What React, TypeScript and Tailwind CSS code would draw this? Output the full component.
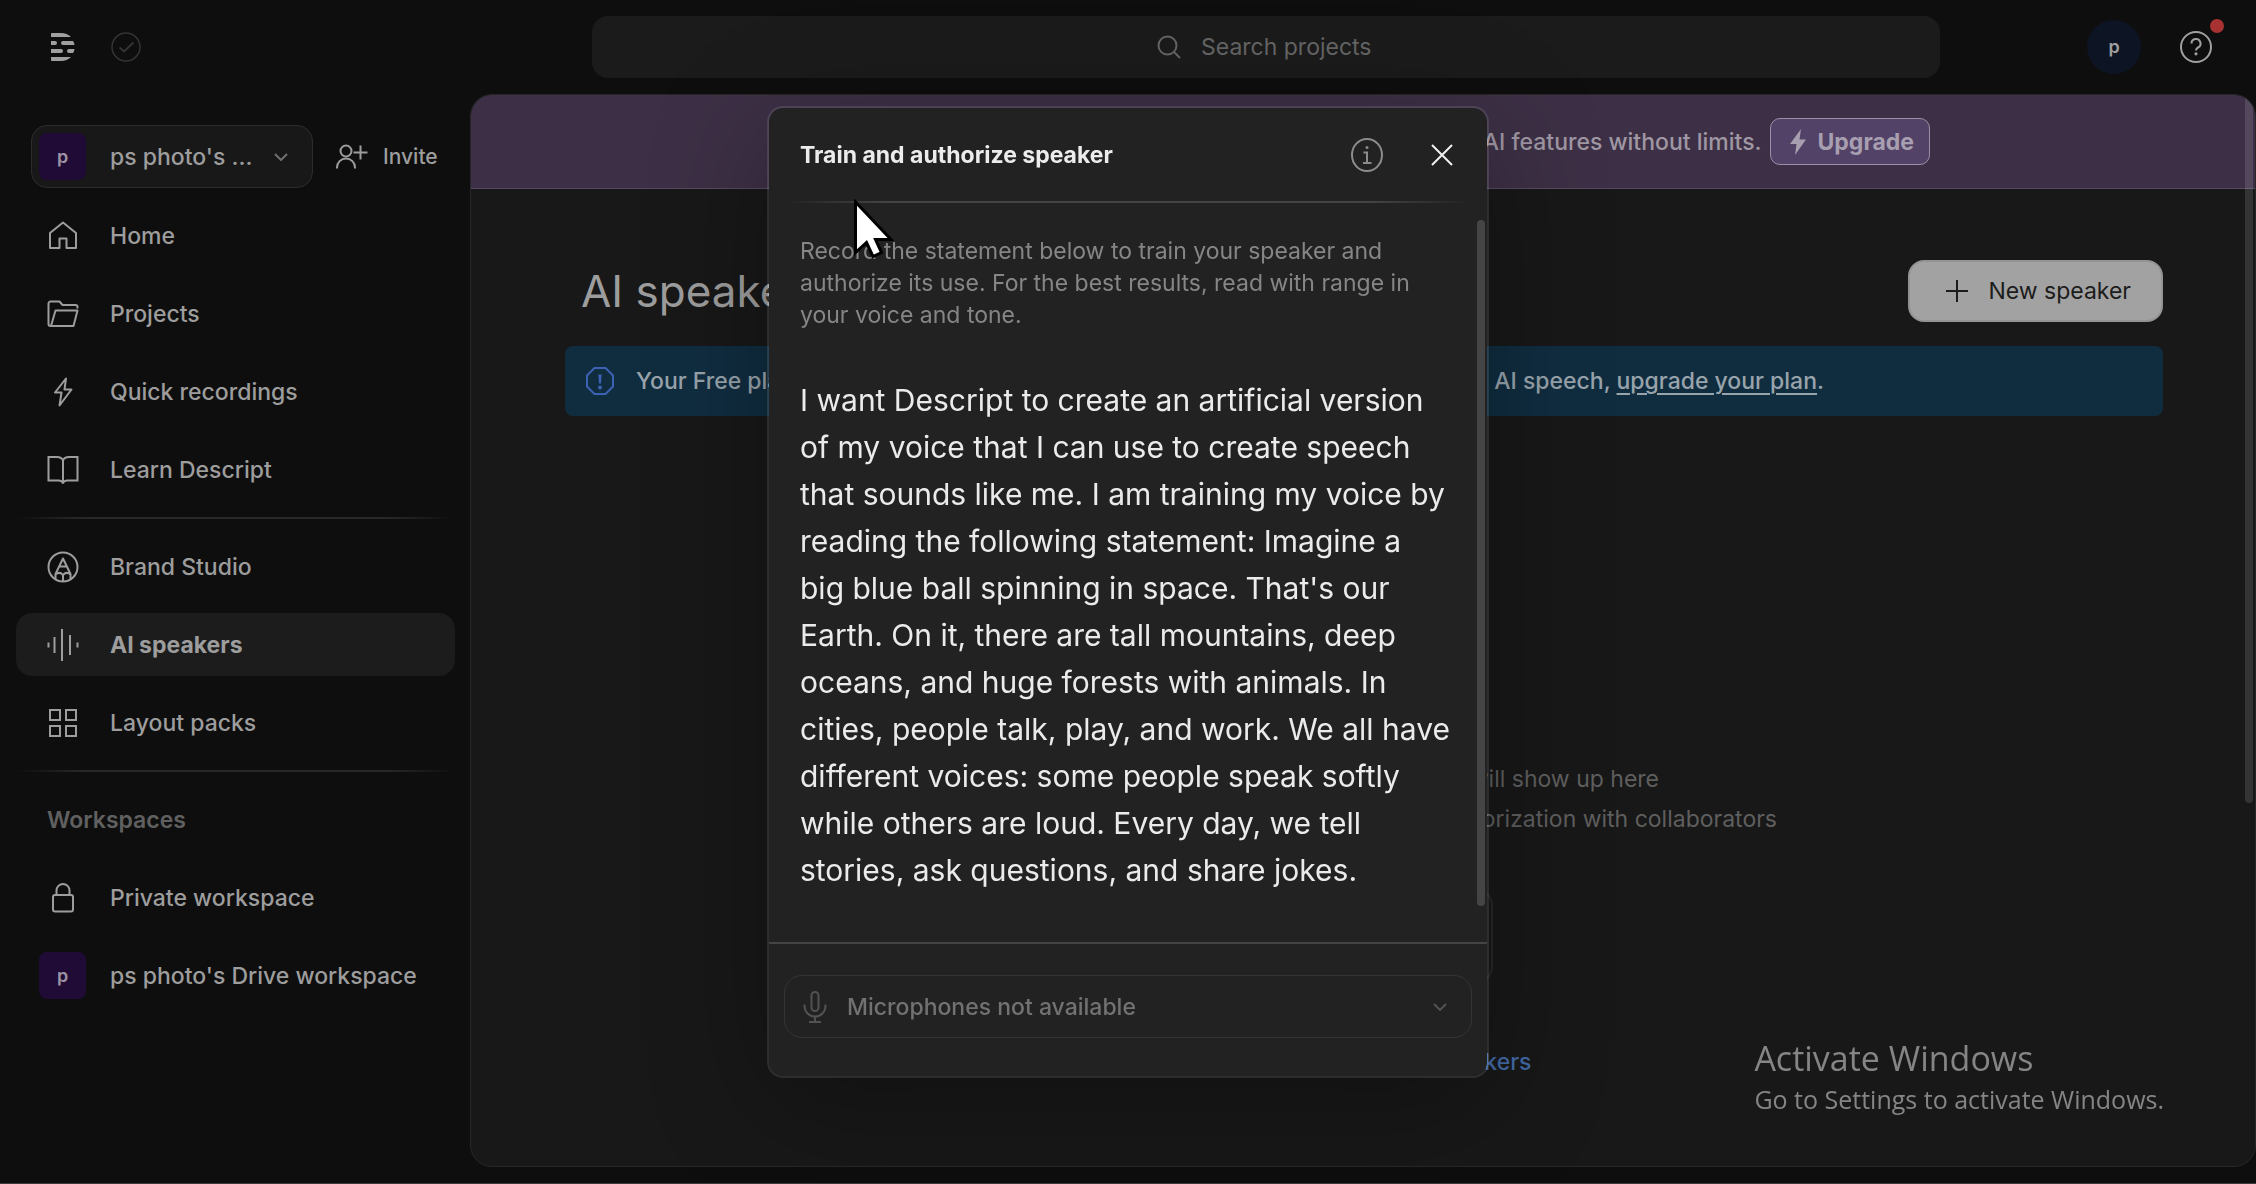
import type { ReactNode } from "react";

type IconProps = { children: ReactNode; size?: string; width?: number };

function Icon({ children, size = "size-8", width = 2 }: IconProps) {
  return (
    <svg
      viewBox="0 0 32 32"
      className={`${size} shrink-0`}
      fill="none"
      stroke="currentColor"
      strokeWidth={width}
      aria-hidden="true"
    >
      {children}
    </svg>
  );
}

const HomeIcon = () => (
  <Icon>
    <path d="M3 28V13L16 2.500 29 13V28H19.500V18.500H12.500V28Z" strokeLinejoin="round" />
  </Icon>
);

const FolderIcon = () => (
  <Icon>
    <path d="M30.500 10.500V9a2 2 0 0 0-2-2H15.500L12.500 3.500H3.500a2 2 0 0 0-2 2V26a2 2 0 0 0 2 2H26.500L30.500 12.500H8.500L4 28" strokeLinejoin="round" />
  </Icon>
);

const BoltIcon = () => (
  <Icon>
    <path d="M19 2.500 8 16.500H14.500L12.500 29.500 24.500 13.500H17.500Z" strokeLinejoin="round" />
  </Icon>
);

const BookIcon = () => (
  <Icon>
    <path d="M16 6.500C15 4 12.500 3 10 3H1.500V26.500H11.500C13.500 26.500 15.500 27 16 29.500 16.500 27 18.500 26.500 20.500 26.500H30.500V3H22C19.500 3 17 4 16 6.500ZM16 6.500V29" />
  </Icon>
);

const BrandIcon = () => (
  <Icon>
    <circle cx="16" cy="16" r="14.500" />
    <path d="M8.500 28.500V23L16 7.500 23.500 23V28.500M12.500 15.500H19.500M16 30V22.500M8.500 23.500Q12 20.500 15 23L16 24.500 17 23Q20 20.500 23.500 23.500" strokeLinejoin="round" />
  </Icon>
);

const WaveIcon = () => (
  <Icon>
    <path d="M1.500 13.500V18.500M7.500 8V24M15 0V32M23 6V26M30.500 13.500V18.500" />
  </Icon>
);

const GridIcon = () => (
  <Icon>
    <path d="M3 3H13V13H3ZM19 3H29V13H19ZM3 19H13V29H3ZM19 19H29V29H19Z" />
  </Icon>
);

const LockIcon = () => (
  <Icon>
    <rect x="6" y="13" width="20" height="16.500" rx="2" />
    <path d="M9.500 13V8.500a6.500 6.500 0 0 1 13 0V13" />
  </Icon>
);

const Chevron = () => (
  <svg viewBox="0 0 14 8" className="h-2 w-3.5 shrink-0" fill="none" stroke="currentColor" strokeWidth="2" aria-hidden="true">
    <path d="M1 1 7 7 13 1" />
  </svg>
);

function DriveBadge() {
  return (
    <span className="flex size-[47px] shrink-0 items-center justify-center rounded-lg bg-[#200b36] text-lg font-semibold text-[#9c93a3]">
      p
    </span>
  );
}

function NavItem({ icon, label, active = false }: { icon: ReactNode; label: string; active?: boolean }) {
  return (
    <li>
      <a
        href="#"
        aria-current={active ? "page" : undefined}
        className={`flex h-[63px] items-center gap-6 rounded-2xl pl-[23px] whitespace-nowrap ${
          active ? "bg-[#1c1c1c] font-bold" : "font-medium"
        }`}
      >
        <span className="flex w-[47px] shrink-0 justify-center">{icon}</span>
        {label}
      </a>
    </li>
  );
}

const Separator = () => (
  <div className="my-4 flex h-0.5">
    <div className="w-[15%] bg-linear-to-r from-transparent to-[#282828]" />
    <div className="flex-1 bg-[#282828]" />
    <div className="w-[15%] bg-linear-to-r from-[#282828] to-transparent" />
  </div>
);

function TopBar() {
  return (
    <header className="flex h-[94px] shrink-0 items-center">
      <div className="flex w-[592px] shrink-0 items-center gap-9 pl-[51px]">
        <svg viewBox="0 0 24 28" className="h-7 w-6" fill="#a0a0a0" aria-label="Descript" role="img">
          <path d="M0 4V1Q0 0 1 0H10Q16 0 20 4ZM0 24H20Q16 28 10 28H1Q0 28 0 27Z" />
          <path d="M0 8H4Q6 8 6 10T4 12H0ZM12 8H22Q23.500 10 23.500 12H12Q10 12 10 10T12 8ZM0 16H10Q12 16 12 18T10 20H0ZM18 16H23.500Q23.500 18 22 20H18Q16 20 16 18T18 16Z" />
        </svg>
        <svg viewBox="0 0 30 30" className="size-[30px] text-[#333333]" fill="none" stroke="currentColor" strokeWidth="1.500" aria-label="Synced" role="img">
          <circle cx="15" cy="15" r="14" />
          <path d="M8.500 15.500 13 19.500 22.500 10.500" strokeWidth="2" />
        </svg>
      </div>
      <label className="flex h-[62px] flex-1 items-center justify-center gap-5 rounded-2xl bg-[#1b1b1b] text-[#656565]">
        <svg viewBox="0 0 24 24" className="size-6" fill="none" stroke="currentColor" strokeWidth="2" aria-hidden="true">
          <circle cx="10.500" cy="10.500" r="9" />
          <path d="M17 17 23 23" />
        </svg>
        <input
          type="text"
          aria-label="Search projects"
          placeholder="Search projects"
          className="w-[174px] bg-transparent text-[23px] outline-none placeholder:text-[#656565]"
        />
      </label>
      <div className="flex w-[316px] shrink-0 items-center justify-end gap-[39px] pr-11">
        <button type="button" aria-label="Account" className="flex size-[54px] items-center justify-center rounded-full bg-[#0d1423] text-lg font-semibold text-[#a0a0a0]">
          p
        </button>
        <button type="button" aria-label="Help" className="relative text-[#a0a0a0]">
          <Icon>
            <circle cx="16" cy="16" r="15" />
            <path d="M11.500 12.500a4.500 4.500 0 1 1 6.500 4C16.500 17.300 16 18 16 19.500" />
            <circle cx="16" cy="22.800" r="1" fill="currentColor" stroke="none" />
            <circle cx="16" cy="22.800" r=".6" />
          </Icon>
          <span className="absolute -top-3 -right-3 size-3.5 rounded-full bg-[#a83232]" />
        </button>
      </div>
    </header>
  );
}

function Sidebar() {
  return (
    <aside className="w-[470px] shrink-0 pt-[31px] pr-[15px] pl-4 font-medium">
      <div className="flex items-center pl-[15px]">
        <button type="button" className="flex h-[63px] w-[282px] items-center rounded-2xl border border-[#2c2c2c] bg-[#181818] pr-6 pl-[7px]">
          <DriveBadge />
          <span className="flex-1 truncate pl-6 text-left">ps photo's ...</span>
          <span className="text-[#6f6f6f]"><Chevron /></span>
        </button>
        <button type="button" className="ml-[23px] flex items-center gap-[15px] text-[21px]">
          <Icon>
            <circle cx="10" cy="10" r="5.500" />
            <path d="M1 27.500V26.500a9 9 0 0 1 18 0V27.500M24.500 4.500V18.500M17.500 11.500H31.500" />
          </Icon>
          Invite
        </button>
      </div>
      <nav aria-label="Main" className="mt-4">
        <ul className="flex flex-col gap-[15px]">
          <NavItem icon={<HomeIcon />} label="Home" />
          <NavItem icon={<FolderIcon />} label="Projects" />
          <NavItem icon={<BoltIcon />} label="Quick recordings" />
          <NavItem icon={<BookIcon />} label="Learn Descript" />
        </ul>
        <Separator />
        <ul className="flex flex-col gap-[15px]">
          <NavItem icon={<BrandIcon />} label="Brand Studio" />
          <NavItem icon={<WaveIcon />} label="AI speakers" active />
          <NavItem icon={<GridIcon />} label="Layout packs" />
        </ul>
        <Separator />
        <h2 className="flex h-[63px] items-center pl-[31px] font-semibold text-[#606060]">Workspaces</h2>
        <ul className="mt-[15px] flex flex-col gap-[15px]">
          <NavItem icon={<LockIcon />} label="Private workspace" />
          <NavItem icon={<DriveBadge />} label="ps photo's Drive workspace" />
        </ul>
      </nav>
    </aside>
  );
}

function Content() {
  return (
    <main className="relative mb-4 flex min-w-0 flex-1 flex-col overflow-hidden rounded-[22px] border border-[#272727] bg-[#181818]">
      <div className="flex h-[94px] shrink-0 justify-center border-b border-[#574a60] bg-[#3d3046] font-medium whitespace-nowrap text-[#9f97a3]">
        <div className="flex w-[1134px] max-w-full items-center justify-end gap-2">
          <p>AI features without limits.</p>
          <button type="button" className="flex h-[47px] items-center gap-3 rounded-[10px] border border-[#9c8fa8] bg-[#534267] pr-[15px] pl-[19px] font-bold text-[#a79fb0]">
            <svg viewBox="0 0 16 26" className="h-[26px] w-4" fill="currentColor" aria-hidden="true">
              <path d="M11 0 0 15H6.500L5 26 16 10.500H9.500Z" />
            </svg>
            Upgrade
          </button>
        </div>
      </div>

      <div className="flex flex-1 flex-col pt-[71px] pr-[92px] pb-[84px] pl-[94px]">
        <div className="flex items-center justify-between pl-4">
          <h1 className="text-[44px]">AI speakers</h1>
          <button type="button" className="flex h-[62px] items-center gap-5 rounded-2xl border-2 border-[#939393] bg-[#a2a2a2] pr-[30px] pl-9 text-[#1c1c1c]">
            <svg viewBox="0 0 22 22" className="size-[22px]" fill="none" stroke="currentColor" strokeWidth="2" aria-hidden="true">
              <path d="M11 0V22M0 11H22" />
            </svg>
            New speaker
          </button>
        </div>
        <div className="mt-6 flex h-[70px] items-center gap-[22px] rounded-lg bg-[#102d40] pl-[21px] font-medium whitespace-nowrap text-[#98a3ab]">
          <svg viewBox="0 0 28 28" className="size-7 shrink-0 text-[#3c62b3]" fill="none" stroke="currentColor" strokeWidth="2" aria-hidden="true">
            <path d="M8.500 1H19.500L27 8.500V19.500L19.500 27H8.500L1 19.500V8.500Z" />
            <path d="M12.400 7.500H15.600L15 16.500H13Z" fill="currentColor" stroke="none" />
            <circle cx="14" cy="20.500" r="2" fill="currentColor" stroke="none" />
          </svg>
          <p className="flex w-[1188px] max-w-full justify-between">
            <span>Your Free plan</span>
            <span>
              AI speech, <a href="#" className="underline decoration-2 underline-offset-4">upgrade your plan</a>.
            </span>
          </p>
        </div>

        <div className="flex flex-1 flex-col items-center justify-end text-right leading-10 whitespace-nowrap text-[#5f5f5f]">
          <p className="w-[590px]">will show up here</p>
          <p className="w-[826px]">authorization with collaborators</p>
          <div className="mt-[50px] h-[94px] w-[257px] rounded-2xl border-2 border-[#282828]" />
          <a href="#" className="mt-[59px] w-[335px] font-medium text-[#4169a5]">AI speakers</a>
        </div>
      </div>
      <div className="absolute top-0 right-0.5 h-[708px] w-2 rounded-b-full bg-white/12" />
    </main>
  );
}

const statement = [
  "I want Descript to create an artificial version",
  "of my voice that I can use to create speech",
  "that sounds like me. I am training my voice by",
  "reading the following statement: Imagine a",
  "big blue ball spinning in space. That's our",
  "Earth. On it, there are tall mountains, deep",
  "oceans, and huge forests with animals. In",
  "cities, people talk, play, and work. We all have",
  "different voices: some people speak softly",
  "while others are loud. Every day, we tell",
  "stories, ask questions, and share jokes.",
];

function TrainDialog() {
  return (
    <div className="fixed inset-0 flex items-center justify-center">
      <section
        role="dialog"
        aria-labelledby="dialog-title"
        className="relative w-[722px] rounded-2xl border-2 border-white/10 bg-[#222222] bg-clip-padding shadow-[0_24px_120px_rgba(0,0,0,0.3)]"
      >
        <header className="flex h-[93px] items-center pr-[33px] pl-[31px]">
          <h2 id="dialog-title" className="flex-1 font-bold text-[#ececec]">Train and authorize speaker</h2>
          <button type="button" aria-label="About voice training" className="text-[#8c8c8c]">
            <svg viewBox="0 0 32 34" className="h-[34px] w-8" fill="none" stroke="currentColor" strokeWidth="2" aria-hidden="true">
              <ellipse cx="16" cy="17" rx="15" ry="16" />
              <path d="M12.500 14.500H16V25M12 25H20.500" />
              <circle cx="16" cy="9.500" r="1.500" fill="currentColor" stroke="none" />
            </svg>
          </button>
          <button type="button" aria-label="Close" className="ml-[47px] text-[#f2f2f2]">
            <svg viewBox="0 0 24 24" className="size-6" fill="none" stroke="currentColor" strokeWidth="2" aria-hidden="true">
              <path d="M2 2 22 22M22 2 2 22" />
            </svg>
          </button>
        </header>
        <div className="mx-4 flex h-0.5">
          <div className="w-[15%] bg-linear-to-r from-transparent to-[#444444]" />
          <div className="flex-1 bg-[#444444]" />
          <div className="w-[15%] bg-linear-to-r from-[#444444] to-transparent" />
        </div>
        <div className="relative pt-8 pr-8 pb-12 pl-[31px]">
          <p className="leading-8 whitespace-nowrap text-[#868686]">
            Record the statement below to train your speaker and
            <br />
            authorize its use. For the best results, read with range in
            <br />
            your voice and tone.
          </p>
          <p className="mt-[46px] text-[30px] leading-[47px] whitespace-nowrap text-[#ebebeb]">
            {statement.map((line) => (
              <span key={line} className="block">{line}</span>
            ))}
          </p>
          <div className="absolute top-[17px] right-0.5 bottom-9 w-2 rounded-full bg-[#454545]" />
        </div>
        <footer className="border-t-2 border-[#444444] px-[15px] pt-[31px] pb-[38px]">
          <label className="flex h-[63px] items-center rounded-[18px] border border-[#343434] pr-6 pl-[18px] text-[#525252]">
            <svg viewBox="0 0 24 32" className="h-8 w-6 shrink-0" fill="none" stroke="currentColor" strokeWidth="2" aria-hidden="true">
              <rect x="8.500" y="1" width="7" height="19" rx="3.500" />
              <path d="M1.500 13.500V15a10.500 10.500 0 0 0 21 0V13.500M12 25.500V31M6 31H18" />
            </svg>
            <select aria-label="Microphone" className="ml-5 flex-1 appearance-none bg-transparent font-medium text-[#727272] outline-none">
              <option>Microphones not available</option>
            </select>
            <Chevron />
          </label>
        </footer>
        <svg viewBox="0 0 40 60" className="absolute top-[91px] left-[85px] h-[60px] w-10" aria-hidden="true">
          <path d="M1.500 3V53.500L12.500 43.500 19 57.500 27.500 53.500 21.500 40.500H37Z" fill="#ffffff" stroke="#000000" strokeWidth="3" />
        </svg>
      </section>
    </div>
  );
}

export default function App() {
  return (
    <div className="flex min-h-screen flex-col border-b border-[#3c3c3c] bg-[#0e0e0e] font-[Inter,sans-serif] text-[23px] leading-8 text-[#9d9d9d]">
      <TopBar />
      <div className="flex flex-1">
        <Sidebar />
        <Content />
      </div>
      <TrainDialog />
      <div className="pointer-events-none fixed right-[92px] bottom-[67px] font-['Open_Sans',sans-serif] text-[#858585]">
        <p className="text-[34px] leading-[46px]">Activate Windows</p>
        <p className="text-[25px] leading-9">Go to Settings to activate Windows.</p>
      </div>
    </div>
  );
}
